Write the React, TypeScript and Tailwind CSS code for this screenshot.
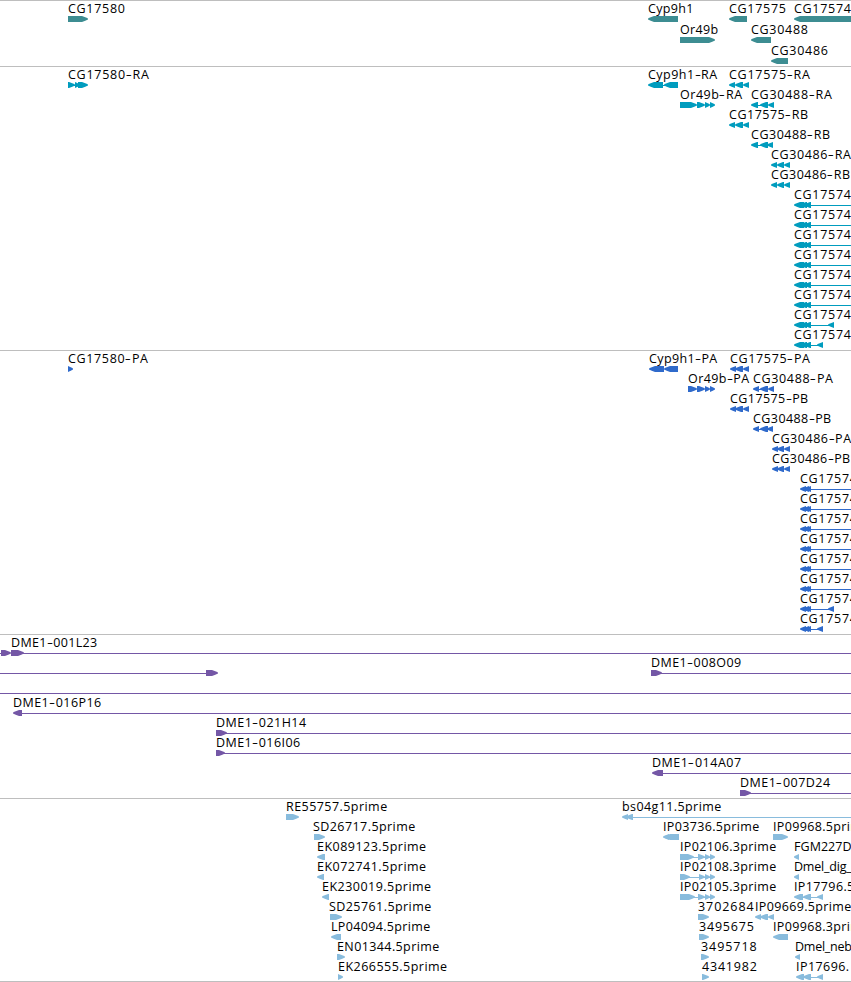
import React from "react";

type Dir = "L" | "R";
type Segment = [start: number, end: number, dir: Dir];

interface Feature {
  label?: string;
  x: number;
  width?: number;
  segments?: Segment[];
  line?: [number, number];
}

interface Track {
  color: string;
  height: string;
  rowHeight: string;
  rows: Feature[][];
}

const VIEW = 851;
const FONT = '12.5px "Open Sans"';

// Spacing between letters that makes a label span the wanted width.
const ruler = document.createElement("canvas").getContext("2d");
function spacing(text: string, width: number) {
  if (!ruler) return 0;
  ruler.font = FONT;
  const hyphens = text.split("-").length - 1;
  return (width - ruler.measureText(text).width - hyphens * 2 + 0.6) / text.length;
}

function f(label: string, x: number, width: number, segments: Segment[], line?: [number, number]): Feature {
  return { label, x, width, segments, line };
}

const geneRow = (x: number, suffixTail: Segment[], lineEnd: number): Feature[] => [
  f("CG17574", x, 57, suffixTail, [810, lineEnd]),
];
const mrna: Segment[] = [[794, 804, "L"], [800, 807, "L"], [804, 811, "L"]];
const cds: Segment[] = [[800, 806, "L"], [803, 809, "L"], [805, 811, "L"]];

const tracks: Track[] = [
  {
    color: "#3d8d92",
    height: "h-[66px]",
    rowHeight: "h-[21px]",
    rows: [
      [
        f("CG17580", 68, 57, [[68, 88, "R"]]),
        f("Cyp9h1", 648, 45, [[648, 678, "L"]]),
        f("CG17575", 729, 57, [[729, 747, "L"]]),
        f("CG17574", 794, 57, [[794, 860, "L"]]),
      ],
      [f("Or49b", 680, 38, [[680, 715, "R"]]), f("CG30488", 751, 57, [[751, 771, "L"]])],
      [f("CG30486", 771, 57, [[771, 788, "L"]])],
    ],
  },
  {
    color: "#009cbe",
    height: "h-[284px]",
    rowHeight: "h-5",
    rows: [
      [
        f("CG17580-RA", 68, 81, [[68, 75, "R"], [75, 80, "R"], [78, 88, "R"]], [68, 80]),
        f("Cyp9h1-RA", 648, 69, [[648, 663, "L"], [664, 678, "L"]], [660, 668]),
        f("CG17575-RA", 729, 81, [[729, 735, "L"], [735, 743, "L"], [743, 749, "L"]]),
      ],
      [
        f("Or49b-RA", 680, 62, [[680, 697, "R"], [697, 705, "R"], [705, 710, "R"], [710, 715, "R"]]),
        f("CG30488-RA", 751, 81, [[751, 758, "L"], [760, 768, "L"], [768, 774, "L"]], [757, 763]),
      ],
      [f("CG17575-RB", 729, 79, [[729, 735, "L"], [735, 743, "L"], [743, 749, "L"]])],
      [f("CG30488-RB", 751, 79, [[751, 758, "L"], [760, 768, "L"], [767, 773, "L"]], [757, 763])],
      [f("CG30486-RA", 771, 80, [[771, 777, "L"], [777, 784, "L"], [784, 790, "L"]])],
      [f("CG30486-RB", 771, 79, [[771, 777, "L"], [777, 784, "L"], [784, 790, "L"]])],
      geneRow(794, mrna, VIEW),
      geneRow(794, mrna, VIEW),
      geneRow(794, mrna, VIEW),
      geneRow(794, mrna, VIEW),
      geneRow(794, mrna, VIEW),
      geneRow(794, mrna, VIEW),
      geneRow(794, [...mrna, [828, 834, "L"]], 830),
      geneRow(794, [...mrna, [817, 823, "L"]], 820),
    ],
  },
  {
    color: "#2f6acb",
    height: "h-[284px]",
    rowHeight: "h-5",
    rows: [
      [
        f("CG17580-PA", 68, 80, [[68, 73, "R"]]),
        f("Cyp9h1-PA", 649, 68, [[649, 664, "L"], [664, 678, "L"]]),
        f("CG17575-PA", 730, 80, [[730, 736, "L"], [735, 743, "L"], [743, 749, "L"]]),
      ],
      [
        f("Or49b-PA", 688, 61, [[688, 697, "R"], [697, 705, "R"], [705, 710, "R"], [710, 715, "R"]]),
        f("CG30488-PA", 753, 80, [[753, 759, "L"], [760, 768, "L"], [768, 774, "L"]], [757, 763]),
      ],
      [f("CG17575-PB", 730, 78, [[730, 736, "L"], [735, 743, "L"], [743, 749, "L"]])],
      [f("CG30488-PB", 753, 78, [[753, 759, "L"], [760, 768, "L"], [767, 773, "L"]], [757, 763])],
      [f("CG30486-PA", 772, 79, [[772, 778, "L"], [777, 784, "L"], [784, 790, "L"]])],
      [f("CG30486-PB", 772, 78, [[772, 778, "L"], [777, 784, "L"], [784, 790, "L"]])],
      geneRow(800, cds, VIEW),
      geneRow(800, cds, VIEW),
      geneRow(800, cds, VIEW),
      geneRow(800, cds, VIEW),
      geneRow(800, cds, VIEW),
      geneRow(800, cds, VIEW),
      geneRow(800, [...cds, [828, 834, "L"]], 830),
      geneRow(800, [...cds, [817, 823, "L"]], 820),
    ],
  },
  {
    color: "#7457a6",
    height: "h-[164px]",
    rowHeight: "h-5",
    rows: [
      [{ x: 0, segments: [[1, 11, "R"]], line: [0, 3] }, f("DME1-001L23", 11, 86, [[11, 24, "R"]], [20, VIEW])],
      [{ x: 0, segments: [[206, 218, "R"]], line: [0, 208] }, f("DME1-008O09", 651, 90, [[651, 662, "R"]], [658, VIEW])],
      [{ x: 0, line: [0, VIEW] }],
      [f("DME1-016P16", 13, 88, [[13, 22, "L"]], [21, VIEW])],
      [f("DME1-021H14", 216, 90, [[216, 227, "R"]], [222, VIEW])],
      [f("DME1-016I06", 216, 84, [[216, 225, "R"]], [222, VIEW])],
      [f("DME1-014A07", 652, 89, [[652, 663, "L"]], [662, VIEW])],
      [f("DME1-007D24", 740, 90, [[740, 751, "R"]], [746, VIEW])],
    ],
  },
  {
    color: "#89bcdd",
    height: "h-[183px]",
    rowHeight: "h-5",
    rows: [
      [
        f("RE55757.5prime", 286, 101, [[286, 299, "R"]]),
        f("bs04g11.5prime", 622, 99, [[622, 628, "L"], [626, 633, "L"]], [632, VIEW]),
      ],
      [
        f("SD26717.5prime", 313, 102, [[314, 325, "R"]]),
        f("IP03736.5prime", 663, 96, [[663, 669, "L"], [664, 679, "L"]]),
        f("IP09968.5prime", 773, 96, [[773, 788, "R"]]),
      ],
      [
        f("EK089123.5prime", 317, 109, [[317, 325, "L"]]),
        f("IP02106.3prime", 680, 96, [[680, 694, "R"], [698, 705, "R"], [705, 710, "R"], [710, 715, "R"]], [690, 710]),
        f("FGM227D", 794, 57, [[794, 799, "L"]]),
      ],
      [
        f("EK072741.5prime", 317, 109, [[317, 324, "L"]]),
        f("IP02108.3prime", 680, 96, [[680, 690, "R"], [699, 705, "R"], [705, 710, "R"], [710, 715, "R"]], [686, 710]),
        f("Dmel_dig_", 794, 57, [[794, 799, "L"]]),
      ],
      [
        f("EK230019.5prime", 322, 109, [[322, 329, "L"]]),
        f("IP02105.3prime", 680, 96, [[680, 695, "R"], [698, 705, "R"], [705, 710, "R"], [710, 715, "R"]], [690, 710]),
        f("IP17796.5", 794, 60, [[794, 803, "L"], [803, 811, "L"], [817, 823, "L"]], [800, 820]),
      ],
      [
        f("SD25761.5prime", 329, 102, [[330, 342, "R"]]),
        f("3702684", 698, 56, [[698, 709, "R"]]),
        f("IP09669.5prime", 755, 96, [[755, 761, "L"], [760, 768, "L"], [768, 774, "L"]]),
      ],
      [
        f("LP04094.5prime", 331, 99, [[331, 341, "L"]]),
        f("3495675", 699, 55, [[699, 709, "R"]]),
        f("IP09968.3prime", 773, 96, [[773, 788, "L"]]),
      ],
      [
        f("EN01344.5prime", 337, 102, [[337, 345, "R"]]),
        f("3495718", 701, 56, [[701, 709, "R"]]),
        f("Dmel_neb", 795, 56, [[795, 800, "L"]]),
      ],
      [
        f("EK266555.5prime", 338, 109, [[338, 343, "R"]]),
        f("4341982", 702, 55, [[702, 709, "R"]]),
        f("IP17696.", 796, 53, [[796, 804, "L"], [803, 811, "L"], [817, 823, "L"]], [800, 820]),
      ],
    ],
  },
];

// Blunt, slightly rounded arrow head on a six pixel high bar.
function arrow([a, b, dir]: Segment) {
  const size = b - a;
  const tip = Math.min(6, size);
  const [tail, head, sign] = dir === "R" ? [a, b, 1] : [b, a, -1];
  const neck = head - sign * tip;
  const mid = head - sign * tip * 0.45;
  return `${tail},0 ${neck},0 ${mid},1.2 ${head},2.5 ${head},3.5 ${mid},4.8 ${neck},6 ${tail},6`;
}

function Label({ text, x, width }: { text: string; x: number; width: number }) {
  const parts = text.split("-");
  return (
    <span
      className="absolute top-px whitespace-pre text-[12.5px] leading-[14px] text-black"
      style={{ left: x, letterSpacing: spacing(text, width) }}
    >
      {parts.map((part, i) => (
        <React.Fragment key={i}>
          {i > 0 && <span className="mx-px inline-block scale-x-150">-</span>}
          {part}
        </React.Fragment>
      ))}
    </span>
  );
}

function Row({ features, color, height }: { features: Feature[]; color: string; height: string }) {
  return (
    <div className={`relative shrink-0 ${height}`}>
      <svg className="absolute left-0 top-[15px]" width={VIEW} height={6} fill={color}>
        {features.map((item, i) => (
          <g key={i}>
            {item.line && (
              <rect x={item.line[0]} y={3} width={item.line[1] - item.line[0]} height={1} shapeRendering="crispEdges" />
            )}
            {item.segments?.map((s, j) => (
              <polygon key={j} points={arrow(s)} />
            ))}
          </g>
        ))}
      </svg>
      {features.map(
        (item, i) => item.label && <Label key={i} text={item.label} x={item.x} width={item.width ?? 0} />,
      )}
    </div>
  );
}

export default function App() {
  return (
    <main className="flex h-[982px] w-[851px] flex-col overflow-hidden bg-white font-['Open_Sans',sans-serif]">
      {tracks.map((track, i) => (
        <section key={i} className={`flex shrink-0 flex-col border-t border-[#bebebe] ${track.height}`}>
          {track.rows.map((features, j) => (
            <Row key={j} features={features} color={track.color} height={track.rowHeight} />
          ))}
        </section>
      ))}
      <div className="h-px shrink-0 bg-[#bebebe]" />
    </main>
  );
}
